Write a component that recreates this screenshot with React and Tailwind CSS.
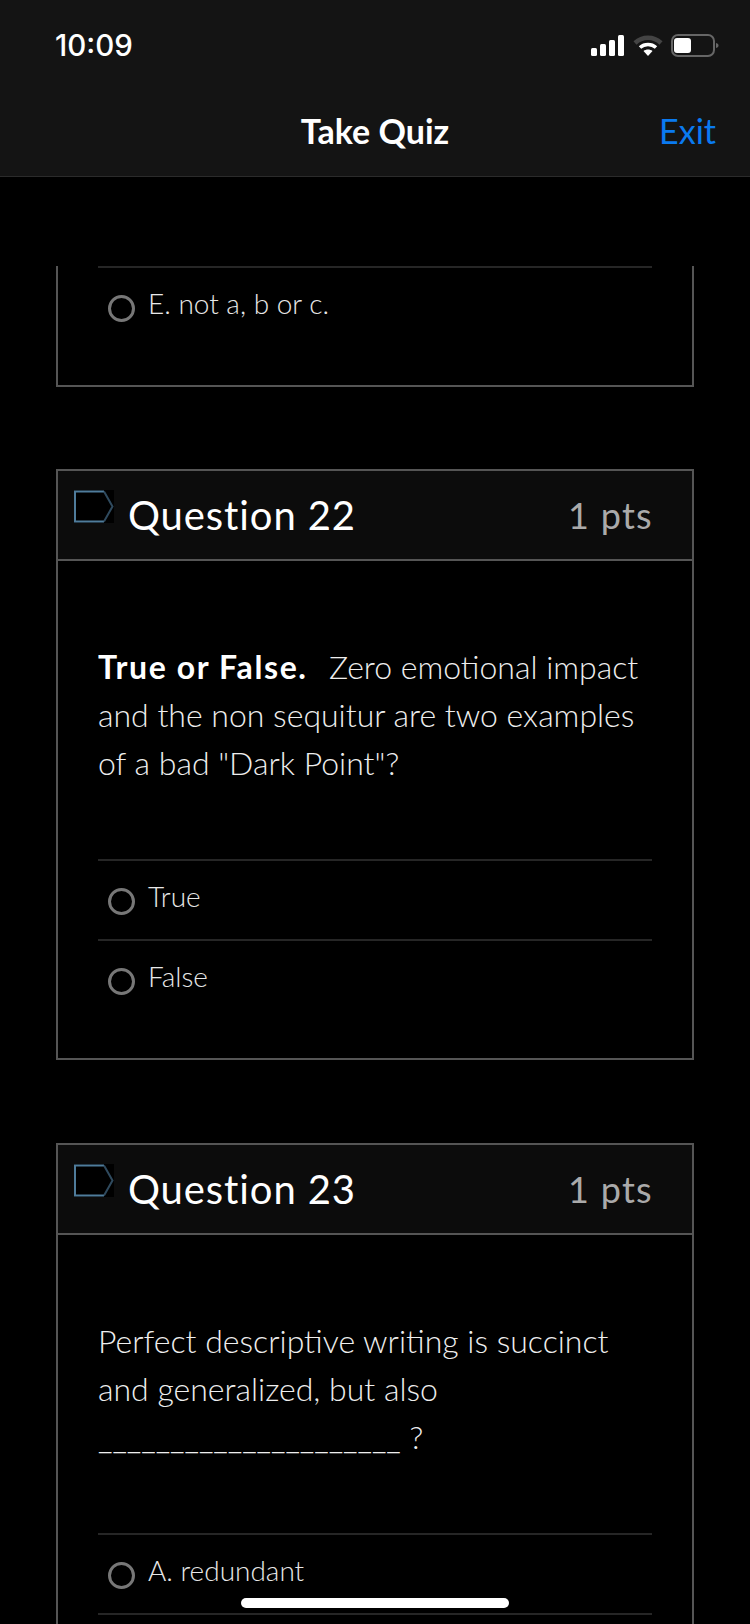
const Radio = () => (
  <span className="w-[27px] h-[27px] rounded-full border-[3px] border-[#777] shrink-0 mt-[2px]" />
);

const Option = ({ label }) => (
  <div className="border-t-2 border-[#262626]">
    <div className="flex items-center h-[78px] pl-[10px] gap-[13px]">
      <Radio />
      <span className="text-[28px] font-light text-[#e8e8e8] -mt-[9px]">{label}</span>
    </div>
  </div>
);

const TagIcon = () => (
  <svg width="40" height="33" viewBox="0 0 40 33" className="shrink-0 bg-black">
    <path d="M30 1.5H1V31.5H30" fill="none" stroke="#4f7c9b" strokeWidth="2" />
    <path d="M30 1.5L38.5 16.5L30 31.5" fill="none" stroke="#2f4a5e" strokeWidth="2" />
  </svg>
);

const QuestionCard = ({ number, children, options, className }) => (
  <section className={`border-2 border-[#555] ${className}`}>
    <div className="h-[90px] bg-[#0c0c0c] border-b-2 border-[#555] flex items-center pl-[16px] pr-[39px]">
      <div className="self-start mt-[19px]">
        <TagIcon />
      </div>
      <h2 className="ml-[14px] text-[40px] font-normal text-white tracking-[0.9px]">Question {number}</h2>
      <span className="ml-auto text-[36px] font-normal text-[#aaa] tracking-[1.3px]">{"1 pts"}</span>
    </div>
    <div className="px-[40px] pb-[39px]">
      <div className="pt-[82px] pb-[72px] text-[32px] leading-[48px] font-light text-[#eee]">{children}</div>
      {options.map((o) => (
        <Option key={o} label={o} />
      ))}
    </div>
  </section>
);

const App = () => {
  return (
    <div className="relative w-[750px] h-[1624px] overflow-hidden bg-black font-['Lato',sans-serif]">
      <header className="h-[177px] bg-[#141414] border-b border-[#2b2b2b]">
        <div className="flex items-center justify-between h-[90px] pl-[55px] pr-[31px]">
          <span className="font-['Inter',sans-serif] font-medium text-[29.5px] text-white">10:09</span>
          <div className="flex items-center">
            <svg width="34" height="21" viewBox="0 0 34 21" fill="white">
              <rect x="0" y="13" width="6" height="8" rx="1.5" />
              <rect x="9" y="9" width="6" height="12" rx="1.5" />
              <rect x="18" y="5" width="6" height="16" rx="1.5" />
              <rect x="27" y="0" width="6" height="21" rx="1.5" />
            </svg>
            <svg width="30" height="21" viewBox="0 0 30 21" fill="none" className="ml-[8px]">
              <path d="M2 8C9.5 1 20.5 1 28 8" stroke="#444" strokeWidth="4.5" />
              <path d="M7 12.5C11.5 8.5 18.5 8.5 23 12.5" stroke="white" strokeWidth="3.5" />
              <path d="M15 21L10.5 16C13 14 17 14 19.5 16Z" fill="white" />
            </svg>
            <svg width="48" height="23" viewBox="0 0 48 23" className="ml-[8px]">
              <rect x="1" y="1" width="42" height="21" rx="6" fill="none" stroke="#666" strokeWidth="2" />
              <rect x="3" y="4" width="17" height="15" rx="3" fill="white" />
              <path d="M45 9C47 9.5 47.5 10.5 47.5 11.5C47.5 12.5 47 13.5 45 14Z" fill="#666" />
            </svg>
          </div>
        </div>
        <nav className="grid grid-cols-3 items-center h-[86px] px-[34px] pb-[6px]">
          <span />
          <h1 className="text-center text-[34px] font-bold text-white whitespace-nowrap">Take Quiz</h1>
          <span className="text-right text-[34px] text-[#0a7af0]">Exit</span>
        </nav>
      </header>

      <main className="pt-[89px] px-[56px]">
        {/* first card is scrolled off, only its tail is showing */}
        <section className="border-2 border-t-0 border-[#555] px-[40px] pb-[39px]">
          <Option label="E. not a, b or c." />
        </section>

        <QuestionCard number={22} className="mt-[82px]" options={["True", "False"]}>
          <p>
            <b className="font-bold text-white tracking-[1.6px] mr-[4px]">True or False.</b>
            {"\u00a0 Zero emotional impact and the non sequitur are two examples of a bad \"Dark Point\"?"}
          </p>
        </QuestionCard>

        <QuestionCard number={23} className="mt-[83px]" options={["A. redundant", ""]}>
          <p>Perfect descriptive writing is succinct and generalized, but also _____________________ ?</p>
        </QuestionCard>
      </main>

      <div className="absolute left-[241px] top-[1598px] w-[268px] h-[10px] rounded-full bg-white" />
    </div>
  );
};

export default App;
